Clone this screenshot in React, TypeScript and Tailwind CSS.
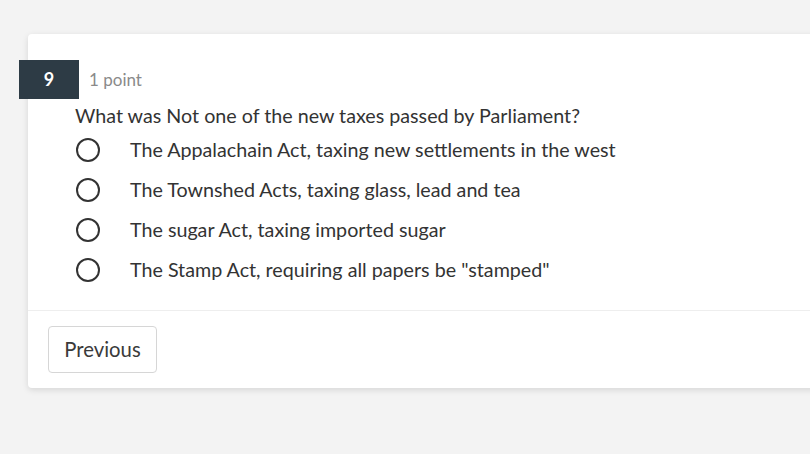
const options = [
  "The Appalachain Act, taxing new settlements in the west",
  "The Townshed Acts, taxing glass, lead and tea",
  "The sugar Act, taxing imported sugar",
  'The Stamp Act, requiring all papers be "stamped"',
];

export default function App() {
  return (
    <div
      className="h-[454px] w-[810px] overflow-hidden bg-[#f3f3f3] pt-[34px] pl-[28px] text-[#333]"
      style={{ fontFamily: "Lato, 'Open Sans', sans-serif" }}
    >
      <div className="w-[800px] rounded-l-[4px] bg-white shadow-[0_2px_6px_rgba(0,0,0,0.12)]">
        <div className="pt-[26px] pb-[20px]">
          <div className="flex items-center">
            <div className="-ml-[9px] flex h-[39px] w-[60px] items-center justify-center bg-[#2d3b45] text-[18px] font-bold text-white">
              9
            </div>
            <span className="ml-[10px] text-[17px] text-[#8a8a8a]">1 point</span>
          </div>
          <div className="ml-[47px] mt-[3px] text-[19.7px] leading-[28px]">
            What was Not one of the new taxes passed by Parliament?
          </div>
          <div className="flex flex-col">
            {options.map((o) => (
              <label key={o} className="flex h-[40px] items-center">
                <span className="ml-[48px] h-[24px] w-[24px] rounded-full border-2 border-[#333]" />
                <span className="ml-[30px] text-[19.7px]">{o}</span>
              </label>
            ))}
          </div>
        </div>
        <div className="border-t border-[#eeeeee] px-[20px] pt-[15px] pb-[15px]">
          <button className="h-[47px] w-[109px] rounded-[4px] border border-[#d6d6d6] bg-white text-[20.3px] text-[#3a3a3a]">
            Previous
          </button>
        </div>
      </div>
    </div>
  );
}
